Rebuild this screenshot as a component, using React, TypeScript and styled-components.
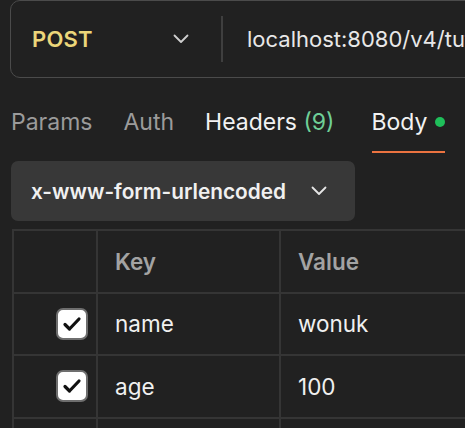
import { FC } from "react";
import styled, { createGlobalStyle } from "styled-components";

const GlobalStyle = createGlobalStyle`
  html, body {
    margin: 0;
    padding: 0;
    background: #212121;
  }
  * {
    box-sizing: border-box;
  }
`;

const Chevron: FC<{ color?: string }> = ({ color = "#cfcfcf" }) => (
  <svg width="16" height="10" viewBox="0 0 16 10" fill="none">
    <path
      d="M1.5 1.5L8 8L14.5 1.5"
      stroke={color}
      strokeWidth="1.8"
      strokeLinecap="round"
      strokeLinejoin="round"
    />
  </svg>
);

const Check: FC = () => (
  <svg width="20" height="16" viewBox="0 0 20 16" fill="none">
    <path
      d="M3 8.5L7.5 13L17 3"
      stroke="#111"
      strokeWidth="3.2"
      strokeLinecap="round"
      strokeLinejoin="round"
    />
  </svg>
);

const rows = [
  { key: "name", value: "wonuk" },
  { key: "age", value: "100" },
];

const App: FC = () => {
  return (
    <Page>
      <GlobalStyle />
      <UrlBar>
        <Method>
          <MethodName>POST</MethodName>
          <Chevron />
        </Method>
        <Divider />
        <UrlText>localhost:8080/v4/tutorial</UrlText>
      </UrlBar>

      <Tabs>
        <Tab>Params</Tab>
        <Tab>Auth</Tab>
        <Tab $bright>
          Headers <Count>(9)</Count>
        </Tab>
        <Tab $bright $active>
          Body<Dot />
        </Tab>
      </Tabs>

      <BodyType>
        <BodyTypeText>x-www-form-urlencoded</BodyTypeText>
        <Chevron color="#e6e6e6" />
      </BodyType>

      <Table>
        <HeadCell />
        <HeadCell>Key</HeadCell>
        <HeadCell>Value</HeadCell>
        {rows.map((r) => (
          <Row key={r.key}>
            <CheckCell>
              <CheckBox>
                <Check />
              </CheckBox>
            </CheckCell>
            <Cell>{r.key}</Cell>
            <Cell>{r.value}</Cell>
          </Row>
        ))}
        <Row>
          <Cell />
          <Cell />
          <Cell />
        </Row>
      </Table>
    </Page>
  );
};

export default App;

const Page = styled.div`
  width: 465px;
  height: 428px;
  overflow: hidden;
  background: #212121;
  padding: 0 0 0 10px;
  font-family: Inter, "Noto Sans", sans-serif;
`;

const UrlBar = styled.div`
  width: 600px;
  height: 78px;
  border: 1.5px solid #4b4b4b;
  border-radius: 10px;
  display: flex;
  align-items: center;
`;

const Method = styled.div`
  width: 210px;
  display: flex;
  align-items: center;
  justify-content: space-between;
  padding: 0 32px 0 21px;
`;

const MethodName = styled.span`
  font-size: 22px;
  font-weight: 600;
  color: #ecd67a;
  letter-spacing: 0.2px;
`;

const Divider = styled.div`
  width: 2px;
  height: 46px;
  background: #3f3f3f;
`;

const UrlText = styled.span`
  margin-left: 24px;
  font-size: 22px;
  color: #e8e8e8;
  white-space: nowrap;
`;

const Tabs = styled.div`
  display: flex;
  align-items: center;
  gap: 31px;
  height: 68px;
  margin-top: 10px;
  padding-left: 1px;
`;

const Tab = styled.div<{ $bright?: boolean; $active?: boolean }>`
  position: relative;
  display: flex;
  align-items: center;
  font-size: 23px;
  color: ${(p) => (p.$bright ? "#f2f2f2" : "#9b9b9b")};
  white-space: pre;
  margin-left: ${(p) => (p.$active ? "6px" : "0")};
  &::after {
    content: "";
    display: ${(p) => (p.$active ? "block" : "none")};
    position: absolute;
    left: 0;
    right: 0;
    bottom: -17px;
    height: 2px;
    background: #ec7340;
  }
`;

const Count = styled.span`
  color: #6fcf97;
`;

const Dot = styled.span`
  width: 10px;
  height: 10px;
  border-radius: 50%;
  background: #1fbf5a;
  margin-left: 8px;
`;

const BodyType = styled.div`
  margin-top: 5px;
  margin-left: 1px;
  width: 344px;
  height: 60px;
  border-radius: 7px;
  background: #383838;
  display: flex;
  align-items: center;
  gap: 25px;
  padding-left: 20px;
`;

const BodyTypeText = styled.span`
  font-size: 20.8px;
  font-weight: 600;
  color: #f0f0f0;
`;

const Table = styled.div`
  margin-top: 8px;
  margin-left: 2px;
  width: 520px;
  display: grid;
  grid-template-columns: 84px 183px 1fr;
  grid-auto-rows: 62.5px;
  border-top: 2px solid #353535;
  border-left: 2px solid #353535;
`;

const HeadCell = styled.div`
  display: flex;
  align-items: center;
  padding-left: 17px;
  font-size: 22.5px;
  font-weight: 600;
  color: #a3a3a3;
  border-right: 2px solid #353535;
  border-bottom: 2px solid #353535;
`;

const Row = styled.div`
  display: contents;
`;

const Cell = styled.div`
  display: flex;
  align-items: center;
  padding-left: 17px;
  font-size: 22.5px;
  color: #f0f0f0;
  border-right: 2px solid #353535;
  border-bottom: 2px solid #353535;
`;

const CheckCell = styled(Cell)`
  justify-content: flex-end;
  padding-left: 0;
  padding-right: 8px;
`;

const CheckBox = styled.div`
  width: 32px;
  height: 32px;
  border-radius: 7px;
  background: #ffffff;
  border: 2px solid #6e6e6e;
  display: flex;
  align-items: center;
  justify-content: center;
`;
